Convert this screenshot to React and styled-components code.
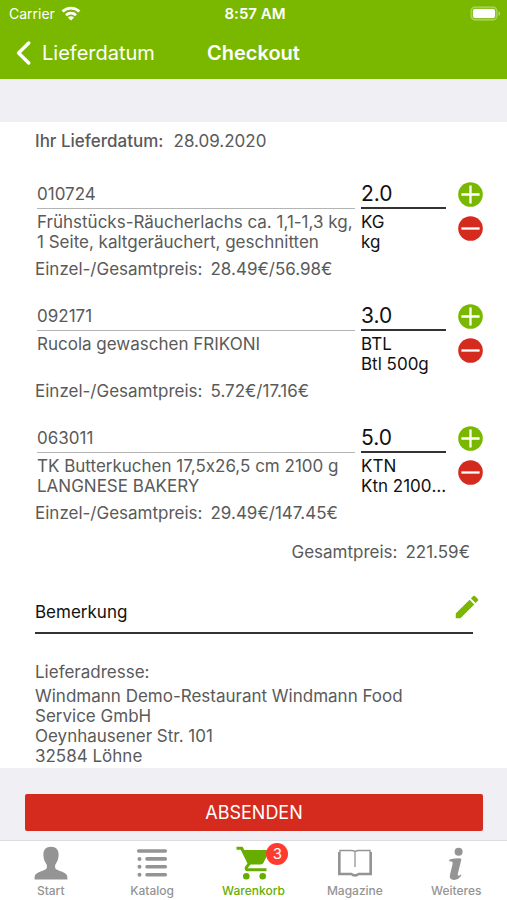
import React, { useState } from 'react';
import styled, { createGlobalStyle } from 'styled-components';
import { MdEdit } from 'react-icons/md';

const startItems = [
  {
    code: '010724',
    name: 'Frühstücks-Räucherlachs ca. 1,1-1,3 kg, 1 Seite, kaltgeräuchert, geschnitten',
    amount: 2,
    price: 28.49,
    unit: 'KG',
    packing: 'kg',
  },
  {
    code: '092171',
    name: 'Rucola gewaschen FRIKONI',
    amount: 3,
    price: 5.72,
    unit: 'BTL',
    packing: 'Btl 500g',
  },
  {
    code: '063011',
    name: 'TK Butterkuchen 17,5x26,5 cm 2100 g LANGNESE BAKERY',
    amount: 5,
    price: 29.49,
    unit: 'KTN',
    packing: 'Ktn 2100 Gramm',
  },
];

const tabs = [
  { label: 'Start', Icon: PersonIcon },
  { label: 'Katalog', Icon: ListIcon },
  { label: 'Warenkorb', Icon: CartIcon, badge: 3 },
  { label: 'Magazine', Icon: BookIcon },
  { label: 'Weiteres', Icon: InfoIcon },
];

function WifiIcon() {
  return (
    <svg width="20" height="15" viewBox="0 0 20 15" fill="none" stroke="currentColor" strokeWidth="2.8">
      <path d="M1.600 5.600a12 12 0 0 1 16.800 0" />
      <path d="M5 9.200a7.200 7.200 0 0 1 10 0" />
      <path d="M10 14.600 6.900 11.500a4.400 4.400 0 0 1 6.200 0z" fill="currentColor" stroke="none" />
    </svg>
  );
}

function BatteryIcon() {
  return (
    <svg width="31" height="15" viewBox="0 0 31 15">
      <rect x="1" y="1" width="26" height="13" rx="4" fill="#fff" fillOpacity=".15" stroke="#fff" strokeOpacity=".3" strokeWidth="1.3" />
      <rect x="3" y="3" width="22" height="9" rx="2" fill="#fff" />
      <path d="M28.5 5.2c2 .8 2 3.8 0 4.6z" fill="#fff" fillOpacity=".45" />
    </svg>
  );
}

function BackIcon() {
  return (
    <svg width="16" height="24" viewBox="0 0 16 24" fill="none" stroke="currentColor" strokeWidth="3.4" strokeLinecap="round" strokeLinejoin="round">
      <path d="M12.700 2 2.600 12l10.100 10" />
    </svg>
  );
}

function PlusIcon() {
  return (
    <svg width="25" height="25" viewBox="0 0 25 25">
      <circle cx="12.5" cy="12.5" r="12.3" fill="#7ab800" />
      <path d="M3.400 12.500h18.200M12.500 3.400v18.200" stroke="#fff" strokeWidth="2.300" />
    </svg>
  );
}

function MinusIcon() {
  return (
    <svg width="25" height="25" viewBox="0 0 25 25">
      <circle cx="12.5" cy="12.5" r="12.3" fill="#d52b1e" />
      <path d="M3.400 12.500h18.200" stroke="#fff" strokeWidth="2.300" />
    </svg>
  );
}

function PersonIcon() {
  return (
    <svg width="34" height="34" viewBox="0 0 34 34" fill="currentColor">
      <path d="M17 .8c-5 0-7.600 3-7.600 7.800 0 3.200.6 6.200 2.600 8.900.9 1.200.9 2 .9 3.500 0 1.700-.8 2.300-3.100 3.200C5.200 26 .6 27.200.6 31.500v2h32.800v-2c0-4.300-4.600-5.500-9.200-7.300-2.300-.9-3.100-1.500-3.100-3.200 0-1.500 0-2.300.9-3.500 2-2.700 2.600-5.700 2.600-8.900C24.600 3.800 22 .8 17 .8z" />
    </svg>
  );
}

function ListIcon() {
  return (
    <svg width="34" height="34" viewBox="0 0 34 34" fill="none" stroke="currentColor" strokeWidth="3.600" strokeLinecap="round">
      <path d="M3.700 5h26.600M12 12.900h18.300M12 20.800h18.300M12 28.700h18.300" />
      <path d="M4.500 12.900h.01M4.500 20.800h.01M4.500 28.700h.01" strokeWidth="4" />
    </svg>
  );
}

function CartIcon() {
  return (
    <svg width="34" height="34" viewBox="0 0 34 34">
      <path d="M.5 2.300h5.200l7.500 15.200-2.800 4q-.8 2 1.100 2.200h19" fill="none" stroke="currentColor" strokeWidth="3" />
      <path d="M6.300 3.900H32q1.500.5.8 2L27.600 16.600q-1 2-3 2H13.300z" fill="currentColor" />
      <circle cx="10.300" cy="30.200" r="3.300" fill="currentColor" />
      <circle cx="26.700" cy="30.200" r="3.300" fill="currentColor" />
    </svg>
  );
}

function BookIcon() {
  return (
    <svg width="36" height="34" viewBox="0 0 36 34" fill="none" stroke="currentColor">
      <path d="M2 6v22M34 6v22" strokeWidth="2" />
      <path d="M18 5.500q-1-1-4-1H3V27.500H14.500q1 1.200 3.500 1.200t3.500-1.200H33V4.500H22q-3 0-4 1v15.500" strokeWidth="1.300" />
      <path d="M1 28.300h13.500q1 1.500 3.500 1.500t3.500-1.500H35" strokeWidth="2" />
    </svg>
  );
}

function InfoIcon() {
  return (
    <svg width="34" height="34" viewBox="0 0 34 34" fill="currentColor">
      <circle cx="19.600" cy="5.800" r="4" />
      <path d="M10.400 13.600q4.500-1.400 10.600-1.400l1.400 1-3.500 14.400q-.5 2.300.6 2.100 1.100-.2 2.100-1.300l.9.900q-2.900 4.600-7.400 4.600-5.400 0-4-5.600l2.400-9.800q.7-2.700-.8-3l-2.500-.2z" />
    </svg>
  );
}

function CartItem({ item, onChange }) {
  return (
    <section>
      <ItemGrid>
        <div>
          <Code>{item.code}</Code>
          <Name>{item.name}</Name>
        </div>
        <div>
          <Amount
            aria-label={'Menge ' + item.code}
            inputMode="decimal"
            value={item.amount.toFixed(1)}
            onChange={(e) => onChange(Number(e.target.value) || 0)}
          />
          <Unit>{item.unit}</Unit>
          <Unit>{item.packing}</Unit>
        </div>
        <Stepper>
          <IconButton aria-label="Mehr" onClick={() => onChange(item.amount + 1)}>
            <PlusIcon />
          </IconButton>
          <IconButton aria-label="Weniger" onClick={() => onChange(Math.max(0, item.amount - 1))}>
            <MinusIcon />
          </IconButton>
        </Stepper>
      </ItemGrid>
      <Price>
        <span>Einzel-/Gesamtpreis:</span>
        <span>
          {item.price.toFixed(2)}€/{(item.price * item.amount).toFixed(2)}€
        </span>
      </Price>
    </section>
  );
}

function App() {
  const [items, setItems] = useState(startItems);
  const [activeTab, setActiveTab] = useState('Warenkorb');

  const total = items.reduce((sum, item) => sum + item.price * item.amount, 0);

  const changeAmount = (code, amount) => {
    setItems(items.map((item) => (item.code === code ? { ...item, amount } : item)));
  };

  return (
    <Page>
      <GlobalStyle />
      <Header>
        <StatusBar>
          <Carrier>
            Carrier
            <WifiIcon />
          </Carrier>
          <Time>8:57 AM</Time>
          <BatteryIcon />
        </StatusBar>
        <NavBar>
          <BackButton>
            <BackIcon />
            Lieferdatum
          </BackButton>
          <Title>Checkout</Title>
        </NavBar>
      </Header>

      <Content>
        <DeliveryDate>
          <strong>Ihr Lieferdatum:</strong>
          <span>28.09.2020</span>
        </DeliveryDate>

        <ItemList>
          {items.map((item) => (
            <CartItem key={item.code} item={item} onChange={(amount) => changeAmount(item.code, amount)} />
          ))}
        </ItemList>

        <Total>
          <span>Gesamtpreis:</span>
          <span>{total.toFixed(2)}€</span>
        </Total>

        <Remark>
          <RemarkInput aria-label="Bemerkung" placeholder="Bemerkung" />
          <EditButton aria-label="Bearbeiten">
            <MdEdit size={30} />
          </EditButton>
        </Remark>

        <Address>
          <AddressTitle>Lieferadresse:</AddressTitle>
          Windmann Demo-Restaurant Windmann Food Service GmbH
          <br />
          Oeynhausener Str. 101
          <br />
          32584 Löhne
        </Address>
      </Content>

      <Footer>
        <SubmitButton>ABSENDEN</SubmitButton>
      </Footer>

      <TabBar>
        {tabs.map(({ label, Icon, badge }) => (
          <Tab key={label} $active={activeTab === label} onClick={() => setActiveTab(label)}>
            <TabIcon>
              <Icon />
              {badge && <Badge>{badge}</Badge>}
            </TabIcon>
            {label}
          </Tab>
        ))}
      </TabBar>
    </Page>
  );
}

const GlobalStyle = createGlobalStyle`
  * {
    box-sizing: border-box;
  }

  body {
    margin: 0;
    background: #efeff4;
    color: #5a5a5a;
    font-family: Inter, "Liberation Sans", sans-serif;
    font-size: 17px;
    font-feature-settings: "calt" 0;
    line-height: 20px;
  }

  button,
  input {
    font: inherit;
    color: inherit;
    border: 0;
    border-radius: 0;
    padding: 0;
    background: none;
  }

  button {
    cursor: pointer;
  }

  svg {
    display: block;
  }
`;

const Page = styled.div`
  display: flex;
  flex-direction: column;
  min-height: 100vh;
`;

const Header = styled.header`
  background: #7ab800;
  color: #fff;
`;

const StatusBar = styled.div`
  display: grid;
  grid-template-columns: 1fr auto 1fr;
  align-items: center;
  height: 27px;
  padding: 0 6px 0 9px;
  font-size: 14px;

  > svg {
    justify-self: end;
  }
`;

const Carrier = styled.div`
  display: flex;
  align-items: center;
  gap: 6px;
`;

const Time = styled.div`
  font-size: 15px;
  font-weight: 600;
`;

const NavBar = styled.nav`
  display: grid;
  grid-template-columns: 1fr auto 1fr;
  align-items: center;
  height: 52px;
  padding: 0 16px;
  font-size: 20px;
`;

const BackButton = styled.button`
  display: flex;
  align-items: center;
  gap: 10px;
`;

const Title = styled.h1`
  margin: 0;
  font-size: 20px;
  font-weight: 600;
`;

const Content = styled.main`
  margin-top: 43px;
  padding: 9px 24px 2px 35px;
  background: #fff;
`;

const DeliveryDate = styled.div`
  display: flex;
  gap: 10px;
  margin-bottom: 29px;

  strong {
    font-weight: 500;
  }
`;

const ItemList = styled.div`
  display: grid;
  gap: 23px;
  margin-bottom: 19px;
`;

const ItemGrid = styled.div`
  display: grid;
  grid-template-columns: minmax(0, 1fr) 85px 31px;
  column-gap: 6px;
  min-height: 79px;
  padding-left: 2px;
`;

const Code = styled.div`
  height: 29px;
  padding-top: 4px;
  border-bottom: 1px solid #b4b4b4;
`;

const Name = styled.div`
  padding-top: 3px;
`;

const Amount = styled.input`
  display: block;
  width: 100%;
  height: 29px;
  margin-bottom: 3px;
  border-bottom: 2px solid #333;
  color: #111;
  font-size: 21px;
`;

/* may run a little into the gap before the buttons */
const Unit = styled.div`
  margin-right: -4px;
  overflow: hidden;
  color: #111;
  text-overflow: ellipsis;
  white-space: nowrap;
`;

const Stepper = styled.div`
  display: flex;
  flex-direction: column;
  align-items: flex-end;
  gap: 9px;
  padding-top: 2px;
`;

const IconButton = styled.button`
  display: block;
`;

const Price = styled.div`
  display: flex;
  gap: 8px;
`;

const Total = styled.div`
  display: flex;
  justify-content: flex-end;
  gap: 8px;
  margin: 0 13px 38px 0;
`;

const Remark = styled.div`
  position: relative;
  margin: 0 10px 28px 0;
`;

const RemarkInput = styled.input`
  display: block;
  width: 100%;
  height: 34px;
  padding-bottom: 8px;
  border-bottom: 2px solid #333;
  color: #111;

  &::placeholder {
    color: #111;
    opacity: 1;
  }
`;

/* the pencil stands a little past the end of the line */
const EditButton = styled.button`
  position: absolute;
  right: -9px;
  top: -8px;
  color: #7ab800;
`;

const Address = styled.address`
  padding-right: 50px;
  font-style: normal;
`;

const AddressTitle = styled.div`
  margin-bottom: 4px;
`;

const Footer = styled.div`
  margin-top: auto;
  padding: 26px 24px 9px 25px;
`;

const SubmitButton = styled.button`
  width: 100%;
  height: 37px;
  border-radius: 2px;
  background: #d52b1e;
  color: #fff;
  font-size: 18px;
`;

const TabBar = styled.nav`
  display: grid;
  grid-template-columns: repeat(5, 1fr);
  height: 60px;
  border-top: 1px solid #dcdce0;
  background: #fff;
`;

const Tab = styled.button`
  display: flex;
  flex-direction: column;
  align-items: center;
  padding-top: 5px;
  color: ${(props) => (props.$active ? '#67ad00' : '#949494')};
  font-size: 12px;
  font-weight: 500;
  line-height: 21px;
`;

const TabIcon = styled.span`
  position: relative;
`;

const Badge = styled.span`
  position: absolute;
  top: -3px;
  left: 30px;
  width: 22px;
  height: 22px;
  border-radius: 50%;
  background: #ff3b30;
  color: #fff;
  font-size: 15px;
  font-weight: 400;
  line-height: 22px;
  text-align: center;
`;

export default App;
